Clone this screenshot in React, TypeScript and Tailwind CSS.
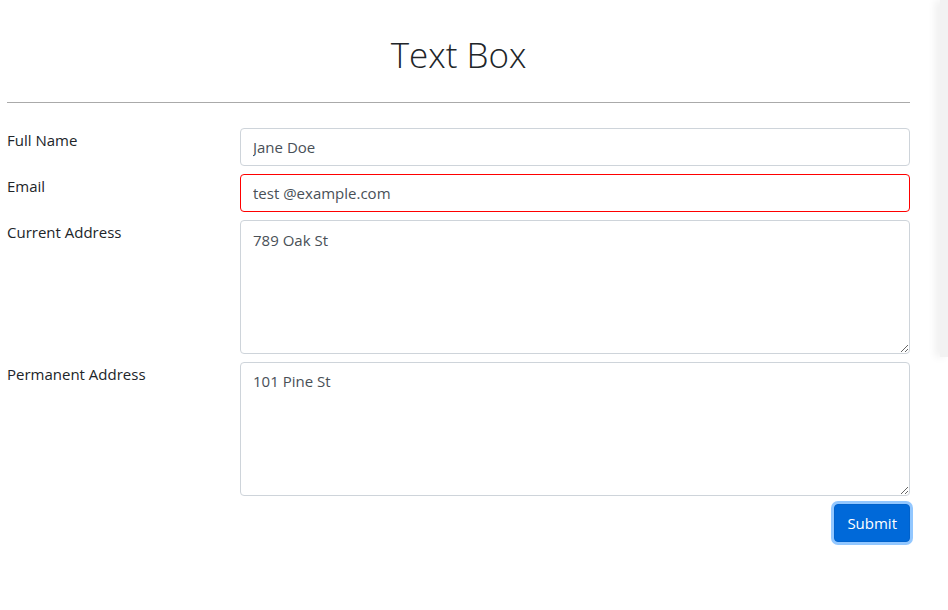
import React from "react";

const font = { fontFamily: '"Open Sans", "Noto Sans", sans-serif' };

function Row({ label, children }: { label: string; children: React.ReactNode }) {
  return (
    <div className="flex">
      <div className="w-[233px] shrink-0 text-[15px] leading-[24px] text-[#212529]">{label}</div>
      <div className="flex-1">{children}</div>
    </div>
  );
}

export default function App() {
  return (
    <div className="relative min-h-[610px] w-[948px] overflow-hidden bg-white" style={font}>
      <div className="ml-[7px] w-[903px]">
        <div className="pt-[31px]">
          <h1 className="text-center text-[35px] font-light leading-[48px] text-[#212529]">Text Box</h1>
        </div>
        <hr className="mt-[23px] border-t border-[#aaaaaa]" />
        <form className="mt-[25px] flex flex-col gap-[8px]" onSubmit={(e) => e.preventDefault()}>
          <Row label="Full Name">
            <input
              defaultValue="Jane Doe"
              className="block h-[38px] w-full rounded-[4px] border border-[#ced4da] px-[12px] text-[15px] text-[#495057] outline-none"
              style={font}
            />
          </Row>
          <Row label="Email">
            <input
              defaultValue="test @example.com"
              className="block h-[38px] w-full rounded-[4px] border border-[#ff0000] px-[12px] text-[15px] text-[#495057] outline-none"
              style={font}
            />
          </Row>
          <Row label="Current Address">
            <textarea
              defaultValue="789 Oak St"
              className="block h-[134px] w-full resize-y rounded-[4px] border border-[#ced4da] px-[12px] py-[7px] text-[15px] leading-[24px] text-[#495057] outline-none"
              style={font}
            />
          </Row>
          <Row label="Permanent Address">
            <textarea
              defaultValue="101 Pine St"
              className="block h-[134px] w-full resize-y rounded-[4px] border border-[#ced4da] px-[12px] py-[6px] text-[15px] leading-[24px] text-[#495057] outline-none"
              style={font}
            />
          </Row>
          <div className="flex justify-end">
            <button
              type="submit"
              className="h-[38px] rounded-[4px] border border-[#0062cc] bg-[#0069d9] px-[12px] text-[15px] text-white shadow-[0_0_0_3px_rgba(38,143,255,0.5)]"
              style={font}
            >
              Submit
            </button>
          </div>
        </form>
      </div>
      <div className="absolute right-0 top-0 h-[357px] w-[8px] bg-[#f2f2f2] shadow-[-4px_0_8px_rgba(0,0,0,0.08)]" />
    </div>
  );
}
